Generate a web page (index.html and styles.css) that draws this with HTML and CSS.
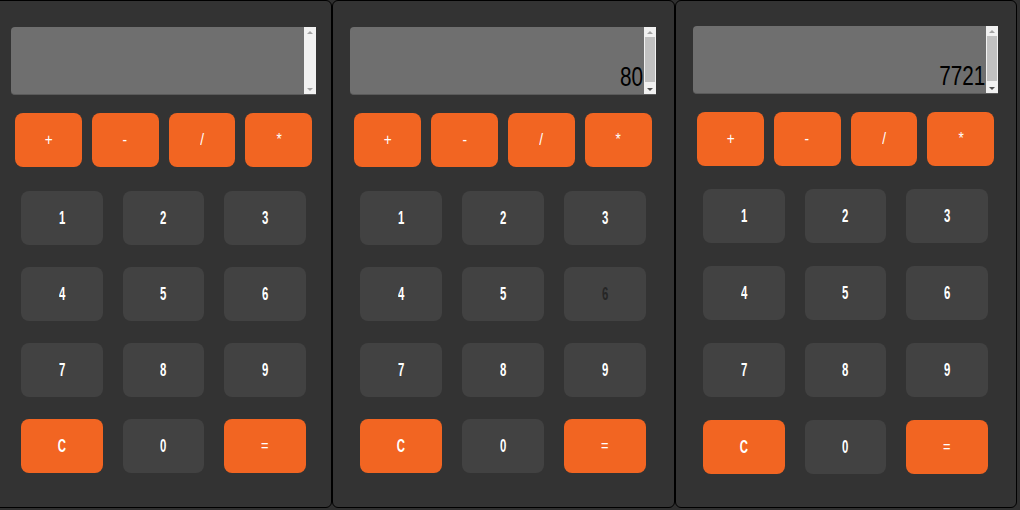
FILE: index.html
```html
<!DOCTYPE html>
<html>
<head>
<meta charset="utf-8">
<link rel="stylesheet" href="styles.css">
</head>
<body>
<div class="calcs">
  <div class="calc first">
    <div class="display">
      <div class="screen"><span class="value"></span></div>
      <div class="scrollbar">
        <div class="arrow up"></div>
        <div class="track"></div>
        <div class="arrow down"></div>
      </div>
    </div>
    <div class="ops">
      <div class="btn op"><span>+</span></div>
      <div class="btn op"><span>-</span></div>
      <div class="btn op"><span>/</span></div>
      <div class="btn op"><span>*</span></div>
    </div>
    <div class="keys">
      <div class="btn num"><span>1</span></div>
      <div class="btn num"><span>2</span></div>
      <div class="btn num"><span>3</span></div>
      <div class="btn num"><span>4</span></div>
      <div class="btn num"><span>5</span></div>
      <div class="btn num"><span>6</span></div>
      <div class="btn num"><span>7</span></div>
      <div class="btn num"><span>8</span></div>
      <div class="btn num"><span>9</span></div>
      <div class="btn act"><span>C</span></div>
      <div class="btn num"><span>0</span></div>
      <div class="btn act eq"><span>=</span></div>
    </div>
  </div>

  <div class="calc">
    <div class="display">
      <div class="screen"><span class="value">80</span></div>
      <div class="scrollbar">
        <div class="arrow up"></div>
        <div class="track"><div class="thumb"></div></div>
        <div class="arrow down active"></div>
      </div>
    </div>
    <div class="ops">
      <div class="btn op"><span>+</span></div>
      <div class="btn op"><span>-</span></div>
      <div class="btn op"><span>/</span></div>
      <div class="btn op"><span>*</span></div>
    </div>
    <div class="keys">
      <div class="btn num"><span>1</span></div>
      <div class="btn num"><span>2</span></div>
      <div class="btn num"><span>3</span></div>
      <div class="btn num"><span>4</span></div>
      <div class="btn num"><span>5</span></div>
      <div class="btn num pressed"><span>6</span></div>
      <div class="btn num"><span>7</span></div>
      <div class="btn num"><span>8</span></div>
      <div class="btn num"><span>9</span></div>
      <div class="btn act"><span>C</span></div>
      <div class="btn num"><span>0</span></div>
      <div class="btn act eq"><span>=</span></div>
    </div>
  </div>

  <div class="calc last">
    <div class="display">
      <div class="screen"><span class="value">7721</span></div>
      <div class="scrollbar">
        <div class="arrow up"></div>
        <div class="track"><div class="thumb"></div></div>
        <div class="arrow down active"></div>
      </div>
    </div>
    <div class="ops">
      <div class="btn op"><span>+</span></div>
      <div class="btn op"><span>-</span></div>
      <div class="btn op"><span>/</span></div>
      <div class="btn op"><span>*</span></div>
    </div>
    <div class="keys">
      <div class="btn num"><span>1</span></div>
      <div class="btn num"><span>2</span></div>
      <div class="btn num"><span>3</span></div>
      <div class="btn num"><span>4</span></div>
      <div class="btn num"><span>5</span></div>
      <div class="btn num"><span>6</span></div>
      <div class="btn num"><span>7</span></div>
      <div class="btn num"><span>8</span></div>
      <div class="btn num"><span>9</span></div>
      <div class="btn act"><span>C</span></div>
      <div class="btn num"><span>0</span></div>
      <div class="btn act eq"><span>=</span></div>
    </div>
  </div>
</div>
</body>
</html>
```

FILE: styles.css
```css
html, body {
  margin: 0;
  padding: 0;
  background: #2f2f2f;
  overflow: hidden;
}

body {
  font-family: "Liberation Sans", Arial, sans-serif;
  width: 1020px;
  height: 510px;
}

.calcs {
  display: flex;
  margin-left: -7px;
  width: 1040px;
}

.calc {
  flex: 0 0 343px;
  height: 508px;
  box-sizing: border-box;
  background: #333333;
  border: 1px solid #000;
  border-radius: 6px;
  padding: 26px 18px 0 17px;
}

.calc.first {
  flex-basis: 339px;
  padding-right: 15px;
}

.calc.last {
  flex-basis: 342px;
  padding-top: 25px;
}

.calc.last .ops {
  margin-top: 18px;
}

.calc.last .keys {
  margin-top: 23px;
  row-gap: 23px;
}

.display {
  display: flex;
  height: 68px;
  background: #6f6f6f;
  border-radius: 4px 0 0 4px;
  border-bottom: 1px solid #5a5a5a;
  box-sizing: border-box;
}

.screen {
  flex: 1;
  display: flex;
  align-items: flex-end;
  justify-content: flex-end;
  padding: 0 1px 3px 0;
  overflow: hidden;
}

.value {
  display: inline-block;
  font-size: 28px;
  line-height: 28px;
  color: #000;
  transform: scaleX(0.74);
  transform-origin: right bottom;
}

.scrollbar {
  flex: 0 0 12px;
  display: flex;
  flex-direction: column;
  background: #f1f1f1;
}

.arrow {
  height: 10px;
  display: flex;
  align-items: center;
  justify-content: center;
}

.arrow::before {
  content: "";
  border-left: 3px solid transparent;
  border-right: 3px solid transparent;
}

.arrow.up::before {
  border-bottom: 3px solid #a3a3a3;
}

.arrow.down::before {
  border-top: 3px solid #a3a3a3;
}

.arrow.down.active::before {
  border-top-color: #505050;
}

.track {
  flex: 1;
  padding: 0 1px 2px;
  display: flex;
}

.thumb {
  flex: 1;
  background: #c1c1c1;
}

.ops {
  display: grid;
  grid-template-columns: repeat(4, 1fr);
  column-gap: 10px;
  margin: 18px 4px 0;
}

.keys {
  display: grid;
  grid-template-columns: repeat(3, 1fr);
  column-gap: 20px;
  row-gap: 22px;
  margin: 24px 10px 0;
}

.btn {
  display: flex;
  align-items: center;
  justify-content: center;
  border-radius: 8px;
  color: #fff;
}

.btn span {
  display: inline-block;
}

.op {
  height: 54px;
  background: #f26522;
  font-size: 16px;
}

.op span {
  transform: scaleX(0.85);
}

.num, .act {
  height: 54px;
  font-size: 19px;
  font-weight: bold;
}

.num span, .act span {
  transform: scaleX(0.6);
}

.num {
  background: #424242;
}

.act {
  background: #f26522;
}

.act.eq {
  font-size: 16px;
  font-weight: normal;
}

.act.eq span {
  transform: scaleX(0.8);
}

.num.pressed {
  color: #262626;
}
```
